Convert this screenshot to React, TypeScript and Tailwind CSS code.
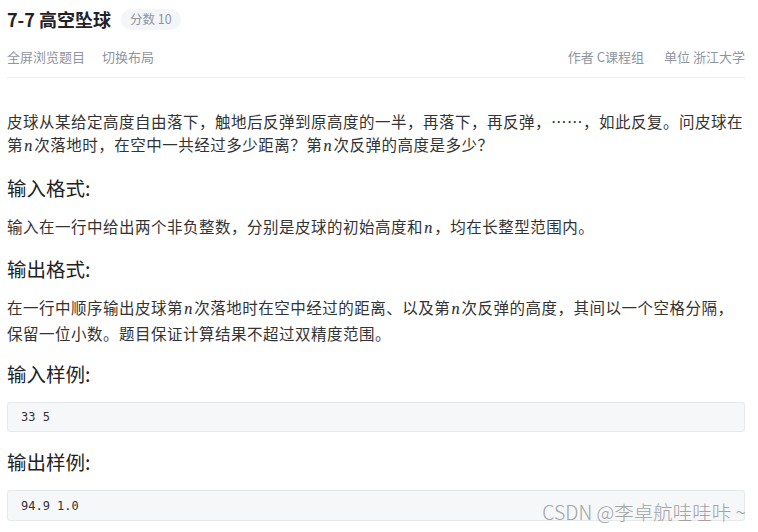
import React from "react";

const N = () => <span className="font-serif italic text-[16.5px] px-[1px]">n</span>;

const Heading = ({ children, className }: { children: React.ReactNode; className: string }) => (
    <h3 className={"text-[19.5px] leading-[26px] font-normal text-[#222] " + className}>{children}</h3>
);

const CodeBox = ({ children, className }: { children: React.ReactNode; className: string }) => (
    <div className={"rounded-[3px] border border-[#e6e8eb] bg-[#f6f7f9] px-[13px] flex items-center font-['DejaVu_Sans_Mono',monospace] text-[12px] text-[#333] " + className}>
        {children}
    </div>
);

export default function App() {
    return (
        <div className="relative w-[758px] h-[532px] overflow-hidden bg-white pl-[7px] pr-[13px] pt-[8px] font-['Noto_Sans_CJK_SC','Noto_Sans',sans-serif] text-[#333]">
            {/* tiêu đề */}
            <div className="flex items-center h-[22px]">
                <h1 className="text-[18px] font-bold text-[#1f2329] leading-[22px]">7-7 高空坠球</h1>
                <span className="ml-[10px] rounded-full bg-[#f3f5f8] px-[9px] h-[21px] flex items-center text-[12.5px] text-[#8f959e]">分数 10</span>
            </div>

            {/* meta */}
            <div className="mt-[17px] flex justify-between h-[20px] items-center text-[13px] text-[#8f959e]">
                <div className="flex gap-[17px]">
                    <span>全屏浏览题目</span>
                    <span>切换布局</span>
                </div>
                <div className="flex gap-[20px]">
                    <span>作者 C课程组</span>
                    <span>单位 浙江大学</span>
                </div>
            </div>
            <div className="mt-[10px] border-b border-[#eceef2]" />

            <p className="mt-[32px] text-[15.5px] leading-[23px] tracking-[0.5px]">
                皮球从某给定高度自由落下，触地后反弹到原高度的一半，再落下，再反弹，……，如此反复。问皮球在第<N />次落地时，在空中一共经过多少距离？第<N />次反弹的高度是多少？
            </p>

            <Heading className="mt-[18px]">输入格式:</Heading>
            <p className="mt-[14px] text-[15.5px] leading-[23px] tracking-[0.5px]">
                输入在一行中给出两个非负整数，分别是皮球的初始高度和<N />，均在长整型范围内。
            </p>

            <Heading className="mt-[17px]">输出格式:</Heading>
            <p className="mt-[13px] text-[15.5px] leading-[24px] tracking-[0.5px]">
                在一行中顺序输出皮球第<N />次落地时在空中经过的距离、以及第<N />次反弹的高度，其间以一个空格分隔，保留一位小数。题目保证计算结果不超过双精度范围。
            </p>

            <Heading className="mt-[16px]">输入样例:</Heading>
            <CodeBox className="mt-[15px] h-[30px]">33 5</CodeBox>

            <Heading className="mt-[17px]">输出样例:</Heading>
            <CodeBox className="mt-[15px] h-[31px]">94.9 1.0</CodeBox>

            {/* watermark */}
            <div className="absolute right-[12px] bottom-[10px] text-[19.5px] leading-[20px] text-[#a3a3a3] font-['Noto_Sans_CJK_SC',sans-serif] font-light">
                CSDN @李卓航哇哇咔 ~
            </div>
        </div>
    );
}
